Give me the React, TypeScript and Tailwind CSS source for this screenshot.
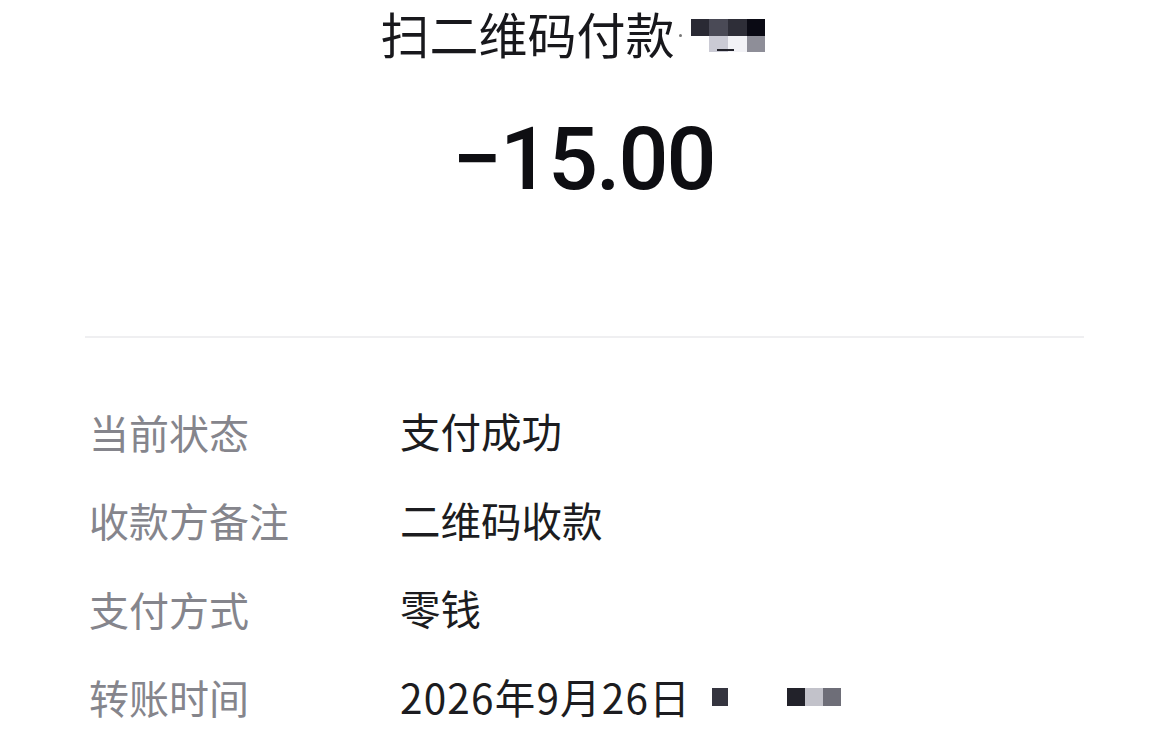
import React from "react";

const cjk = { fontFamily: '"Noto Sans CJK SC", "Noto Sans", sans-serif' };

function Row({ label, children }: { label: string; children: React.ReactNode }) {
  return (
    <div className="flex h-[88.5px] items-center">
      <div className="w-[315px] shrink-0 pl-[4px] text-[40px] leading-none text-[#85858c]">{label}</div>
      <div className="flex items-center text-[40.5px] leading-none text-[#1c1c20]">{children}</div>
    </div>
  );
}

export default function App() {
  return (
    <div className="h-[736px] w-[1169px] overflow-hidden bg-white" style={cjk}>
      <div className="flex flex-col items-center">
        <div className="mt-[5px] flex items-center pr-[24px] text-[49px] leading-[1.15] text-[#18181c]">
          <span>扫二维码付款</span>
          <div className="ml-[4px] mt-[4px] h-[3px] w-[3px] rounded-full bg-[#777]" />
          <div className="ml-[9px] mt-[4px] flex flex-col">
            <div className="flex h-[17px]">
              <div className="w-[18px] bg-[#2a2a34]" />
              <div className="w-[19px] bg-[#4a4a56]" />
              <div className="w-[19px] bg-[#2e2e38]" />
              <div className="w-[18px] bg-[#0a0a14]" />
            </div>
            <div className="relative flex h-[16px]">
              <div className="w-[18px] bg-white" />
              <div className="w-[19px] bg-[#cacad4]" />
              <div className="w-[19px] bg-[#f2f2f6]" />
              <div className="w-[18px] bg-[#8e8e98]" />
              <div className="absolute left-[26px] top-[13px] h-[2px] w-[17px] bg-[#22222a]" />
            </div>
          </div>
        </div>
        <div
          className="mt-[54px] pr-[2px] text-[88px] font-medium leading-none tracking-[-2px] text-[#0e0e12]"
          style={{ fontFamily: 'Roboto, "Noto Sans", sans-serif' }}
        >
          −15.00
        </div>
      </div>

      <div className="mx-[85px] mt-[133px] h-[2px] bg-[#efeff1]" />

      <div className="mx-[85px] mt-[49px] flex flex-col">
        <Row label="当前状态">支付成功</Row>
        <Row label="收款方备注">二维码收款</Row>
        <Row label="支付方式">零钱</Row>
        <Row label="转账时间">
          <span className="tracking-[1.2px]">2026年9月26日</span>
          <div className="ml-[21px] h-[18px] w-[16px] bg-[#35353f]" />
          <div className="ml-[59px] flex h-[18px]">
            <div className="w-[18px] bg-[#22222a]" />
            <div className="w-[18px] bg-[#c2c2ca]" />
            <div className="w-[18px] bg-[#6e6e78]" />
          </div>
        </Row>
      </div>
    </div>
  );
}
